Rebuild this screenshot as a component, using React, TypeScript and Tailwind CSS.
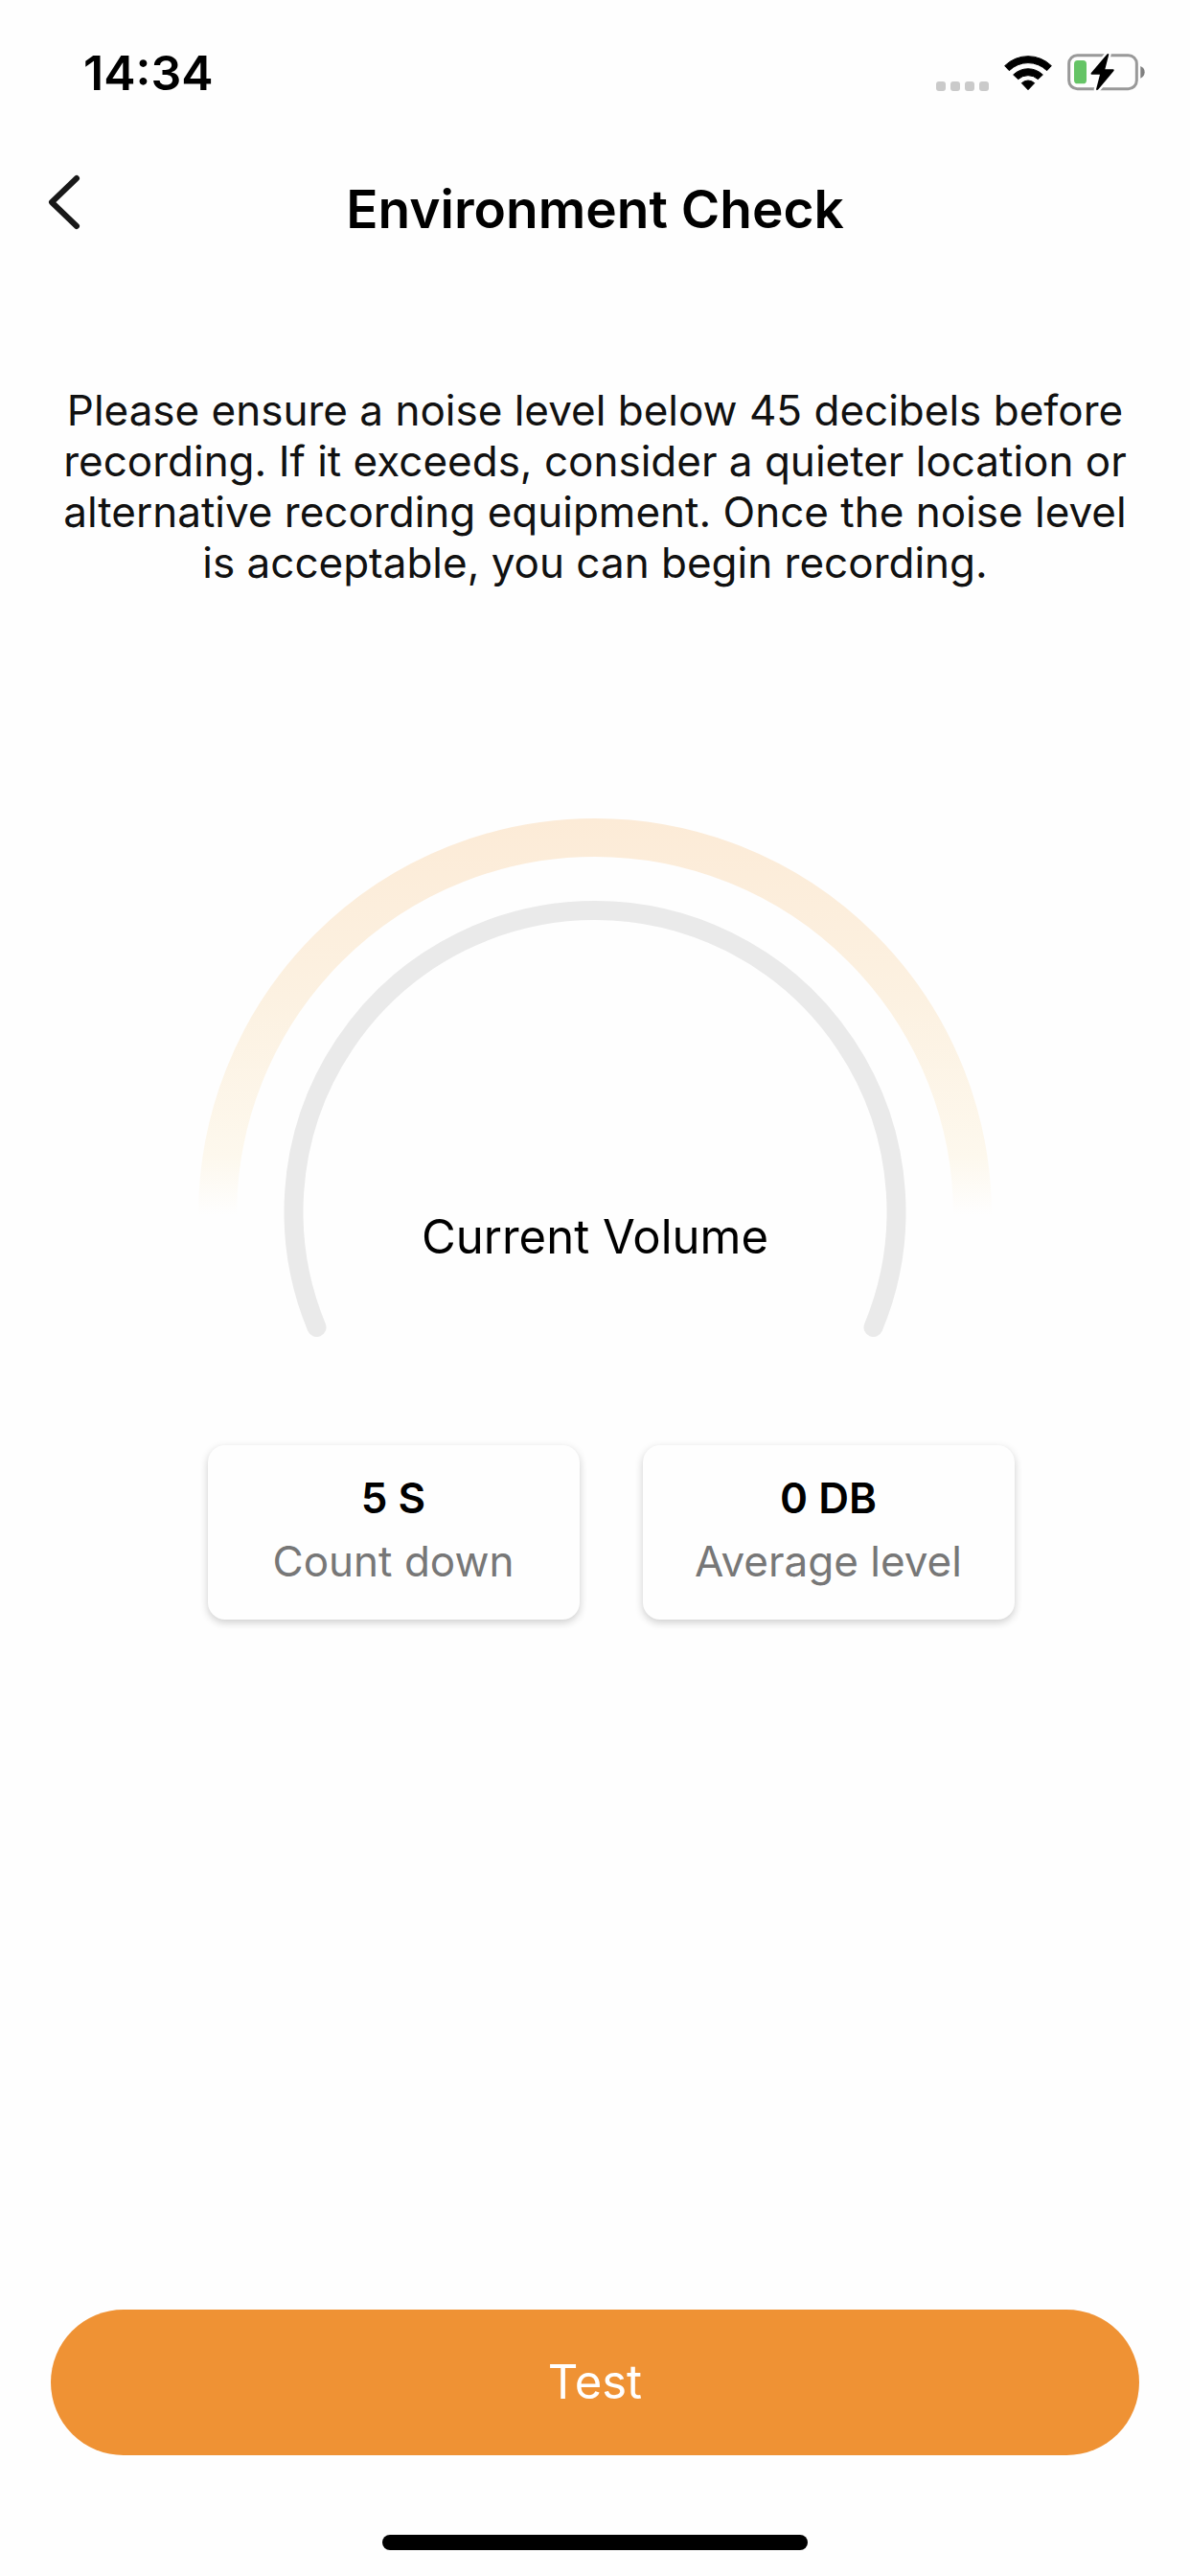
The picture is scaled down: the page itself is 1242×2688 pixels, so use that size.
import { useState } from 'react';

interface StatCardProps {
  value: string;
  label: string;
}

const INSTRUCTIONS =
  'Please ensure a noise level below 45 decibels before recording. If it exceeds, consider a quieter location or alternative recording equipment. Once the noise level is acceptable, you can begin recording.';

function StatusBar() {
  return (
    <div className="flex items-end justify-between pt-11 pl-[87px] pr-[46px]">
      <span className="text-[50px] leading-[64px] font-semibold">14:34</span>
      <div className="flex items-end gap-4 pb-[13px]">
        <div className="flex gap-[5px]">
          {[0, 1, 2, 3].map(i => (
            <span key={i} className="size-[10px] rounded-[3px] bg-[#cacaca]" />
          ))}
        </div>

        {/* Wi-Fi */}
        <svg width="50" height="38" viewBox="0 0 150 114" fill="black" stroke="black" strokeWidth="3" strokeLinejoin="round">
          <path d="M2 35A104 104 0 0 1 148 35L134 50A84 84 0 0 0 16 50Z" />
          <path d="M29 63A66 66 0 0 1 121 63L106 77A46 46 0 0 0 44 77Z" />
          <path d="M55 89A29 29 0 0 1 95 89L75 110Z" />
        </svg>

        {/* Battery, charging */}
        <svg width="82" height="40" viewBox="0 0 246 120" fill="none">
          <rect x="5" y="8" width="212" height="105" rx="26" stroke="#999" strokeWidth="9" />
          <path d="M229 42C238 46 242 52 242 61C242 70 238 76 229 80Z" fill="#808080" />
          <rect x="21" y="24" width="39" height="73" rx="11" fill="#65c466" />
          <path
            d="M123 6L74 64Q72 68 76 68L102 68L90 115Q92 120 97 115L146 56Q147 52 143 52L118 52L130 5Q128 1 123 6Z"
            fill="black"
            stroke="#fefefe"
            strokeWidth="14"
            strokeLinejoin="round"
            paintOrder="stroke"
          />
        </svg>
      </div>
    </div>
  );
}

function Header() {
  return (
    <header className="grid grid-cols-[1fr_auto_1fr] items-center px-12 pt-[73px]">
      <button type="button" aria-label="Back" className="w-fit pb-[14px]">
        <svg width="38" height="60" viewBox="0 0 38 60" fill="none" stroke="#181818" strokeWidth="6" strokeLinecap="round" strokeLinejoin="round">
          <path d="M32 5L6 30L32 55" />
        </svg>
      </button>
      <h1 className="text-[55px] leading-[72px] font-semibold">Environment Check</h1>
    </header>
  );
}

function VolumeGauge() {
  return (
    <div className="grid w-2/3">
      <svg viewBox="0 0 828 541" fill="none" className="col-start-1 row-start-1 w-full">
        <defs>
          <linearGradient id="glow" gradientUnits="userSpaceOnUse" x1="0" y1="0" x2="0" y2="414">
            <stop offset="0" stopColor="#fcebd7" />
            <stop offset="0.45" stopColor="#fcf1e1" />
            <stop offset="0.85" stopColor="#fdf8ed" />
            <stop offset="1" stopColor="#fefefe" />
          </linearGradient>
        </defs>
        <path d="M20 414A394 394 0 0 1 808 414" stroke="url(#glow)" strokeWidth="40" />
        <path d="M123.5 531A314.5 314.5 0 1 1 704.5 531" stroke="#eaeaea" strokeWidth="20" strokeLinecap="round" />
      </svg>
      <p className="col-start-1 row-start-1 self-end pb-[72px] text-center text-[49px] leading-[64px]">
        Current Volume
      </p>
    </div>
  );
}

function StatCard({ value, label }: StatCardProps) {
  return (
    <div className="w-[388px] rounded-[18px] bg-[#fefefe] pt-[22px] pb-7 text-center text-[44px] leading-[66px] shadow-[0_3px_9px_rgba(0,0,0,0.2)]">
      <p className="font-semibold">{value}</p>
      <p className="text-[#777777]">{label}</p>
    </div>
  );
}

export default function App() {
  const [testing, setTesting] = useState(false);

  return (
    <div className="flex min-h-screen flex-col bg-[#fefefe] font-['Inter',sans-serif] text-black">
      <StatusBar />
      <Header />

      <main className="flex flex-1 flex-col items-center">
        <p className="px-[53px] pt-[147px] text-center text-[44px] leading-[53px] text-[#111111]">
          {INSTRUCTIONS}
        </p>

        <div className="flex w-full justify-center pt-60">
          <VolumeGauge />
        </div>

        <div className="flex justify-center gap-[66px] pt-[113px] pl-[33px]">
          <StatCard value="5 S" label="Count down" />
          <StatCard value="0 DB" label="Average level" />
        </div>
      </main>

      <footer className="flex flex-col items-center px-[53px] pb-[27px]">
        <button
          type="button"
          aria-pressed={testing}
          onClick={() => setTesting(!testing)}
          className="h-[152px] w-full rounded-full bg-[#ef9234] text-[49px] leading-[64px] text-white"
        >
          Test
        </button>
        <div className="mt-[83px] h-4 w-[444px] rounded-full bg-black" />
      </footer>
    </div>
  );
}
